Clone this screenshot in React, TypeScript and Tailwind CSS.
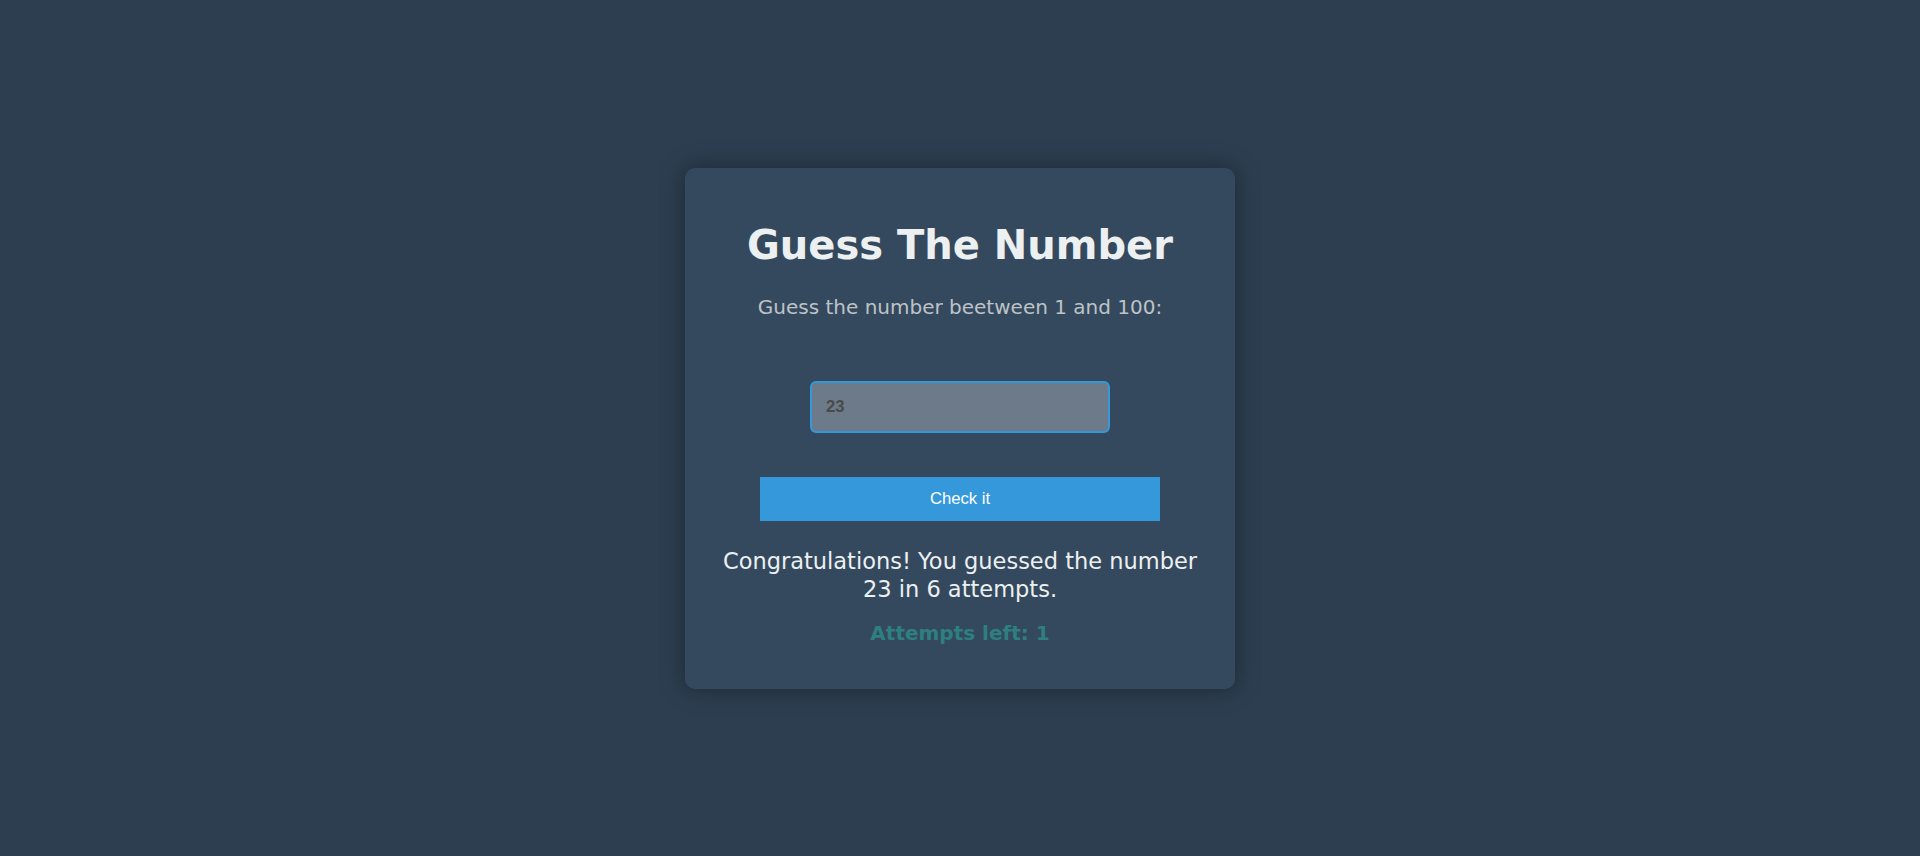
import React from "react";

export default function App() {
  return (
    <div className="min-h-screen w-full bg-[#2c3e50] flex items-center justify-center">
      <div
        className="w-[550px] rounded-[10px] bg-[#34495e] px-[37.5px] pt-[54px] pb-[44px] flex flex-col items-center text-center shadow-[0_0_25px_rgba(0,0,0,0.35)]"
        style={{ fontFamily: '"DejaVu Sans", Verdana, sans-serif' }}
      >
        <h1 className="text-[40px] leading-[47px] font-bold text-[#ecf0f1]">Guess The Number</h1>
        <p className="mt-[26px] text-[20px] leading-[24px] text-[#bdc3c7]">
          Guess the number beetween 1 and 100:
        </p>
        <input
          type="text"
          defaultValue="23"
          className="mt-[62px] w-[300px] h-[52px] rounded-[6px] border-2 border-[#3498db] bg-[#6c7a89] px-[14px] text-[16.67px] font-bold text-[#4a4a4a] outline-none"
          style={{ fontFamily: '"Liberation Sans", Arial, sans-serif' }}
        />
        <button
          className="mt-[44px] w-[400px] h-[44px] bg-[#3498db] text-white text-[16.67px]"
          style={{ fontFamily: '"Liberation Sans", Arial, sans-serif' }}
        >
          Check it
        </button>
        <p className="mt-[26px] text-[22.5px] leading-[28px] text-[#ecf0f1]">
          Congratulations! You guessed the number 23 in 6 attempts.
        </p>
        <p className="mt-[18px] text-[20px] leading-[24px] font-bold text-[#2e7f80]">Attempts left: 1</p>
      </div>
    </div>
  );
}
